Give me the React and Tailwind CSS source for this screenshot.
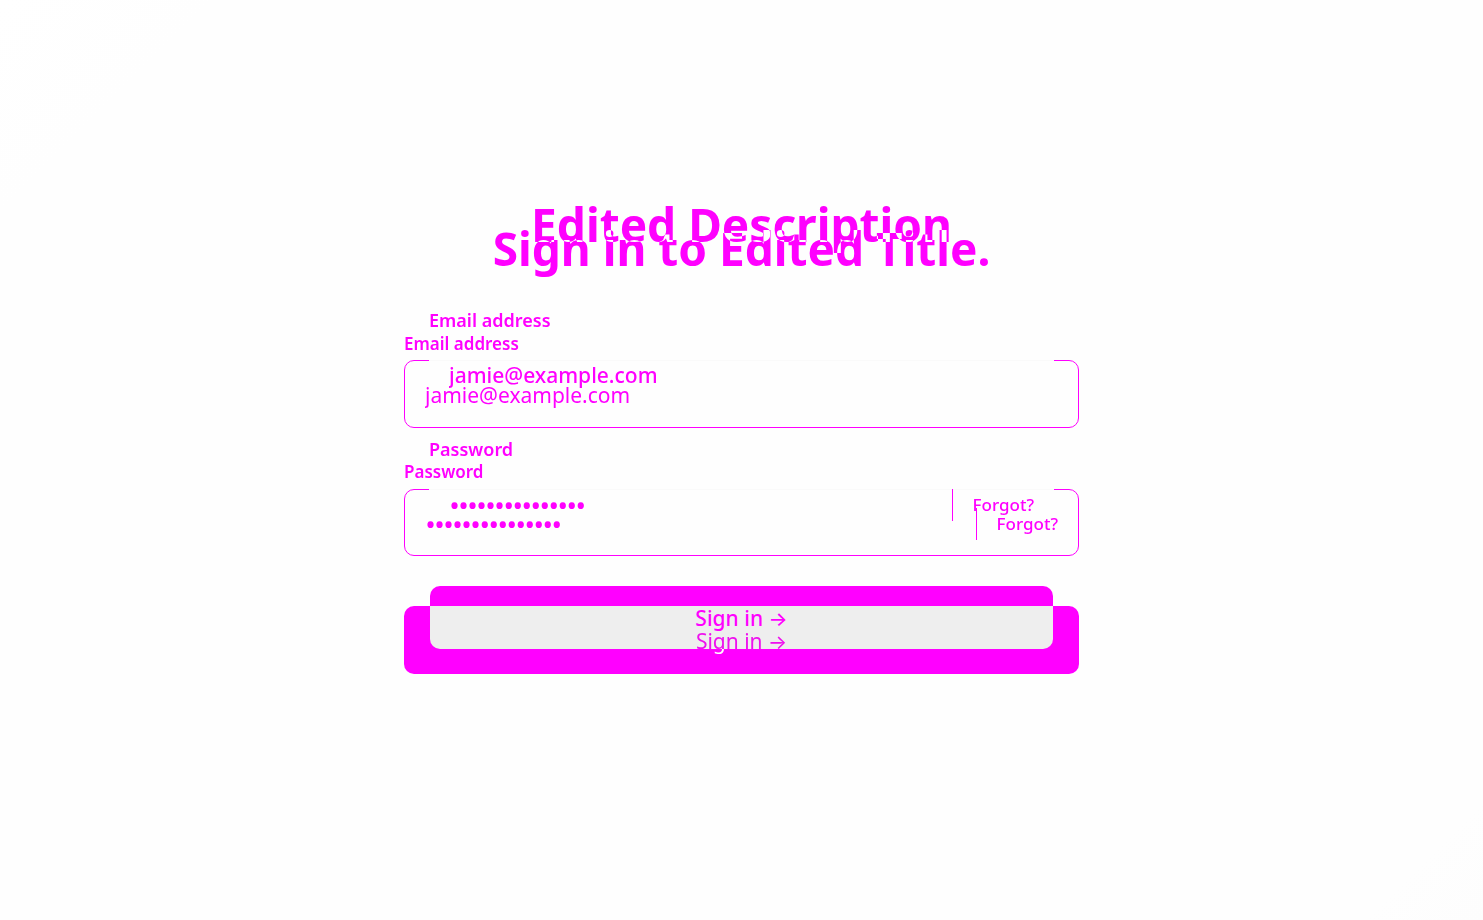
import React from "react";

const textField = "block w-full bg-transparent px-5 text-[21px] outline-none";
const passwordField = "h-full min-w-0 flex-1 bg-transparent px-[21px] text-[24px] font-semibold outline-none";
const forgotButton = "h-[32px] border-l border-[#ff00ff] pl-5 text-[17px] font-medium";

function SignInText() {
  return (
    <>
      Sign in <span className="font-['Inter',sans-serif] text-[20px] leading-none">→</span>
    </>
  );
}

function WideForm() {
  return (
    <form className="col-start-1 row-start-1 w-full max-w-[675px] justify-self-center pt-6" onSubmit={(e) => e.preventDefault()}>
      <h1 className="whitespace-nowrap pt-[2px] text-center text-[46px] leading-[64px] font-bold">Sign in to Edited Title.</h1>
      <label htmlFor="email" className="mt-[53px] block text-[17px] leading-[22px] font-semibold">Email address</label>
      <input id="email" type="email" defaultValue="jamie@example.com" className={`${textField} mt-[5px] h-[68px] rounded-[10px] border border-[#ff00ff] pt-[2px]`} />
      <label htmlFor="password" className="mt-[33px] block text-[17px] leading-[22px] font-semibold">Password</label>
      <div className="mt-[6px] flex h-[67px] items-center rounded-[10px] border border-[#ff00ff] pt-[2px] pr-5">
        <input id="password" type="password" defaultValue="examplepassword" className={passwordField} />
        <button type="button" className={forgotButton}>Forgot?</button>
      </div>
      <button type="submit" className="mt-[50px] block h-[68px] w-full rounded-[10px] bg-[#ff00ff] pt-[4px] text-[21px]">
        <span className="relative z-10 text-[#00ff00] mix-blend-difference"><SignInText /></span>
      </button>
    </form>
  );
}

function NarrowForm() {
  return (
    <form className="col-start-1 row-start-1 w-full max-w-[625px] justify-self-center" onSubmit={(e) => e.preventDefault()}>
      <h2 className="whitespace-nowrap pt-[2px] text-center text-[46px] leading-[64px] font-bold text-[#00ff00] mix-blend-difference">Edited Description</h2>
      <label htmlFor="email-edited" className="mt-[53px] block text-[18px] leading-[22px] font-semibold">Email address</label>
      <input id="email-edited" type="email" defaultValue="jamie@example.com" className={`${textField} relative mt-[29px] h-[30px] border-t border-[#fafafa] font-medium`} />
      <label htmlFor="password-edited" className="mt-[48px] block text-[18px] leading-[22px] font-semibold">Password</label>
      <div className="relative mt-[29px] flex h-[30px] items-center border-t border-[#fafafa] pr-5">
        <input id="password-edited" type="password" defaultValue="examplepassword" className={passwordField} />
        <button type="button" className={forgotButton}>Forgot?</button>
      </div>
      <div className="mt-[67px] px-px">
        <button type="submit" className="relative block h-[63px] w-full rounded-[10px] bg-[linear-gradient(#ff00ff_20px,#eeeeee_20px)] pt-[2px] text-[21px] font-medium"><SignInText /></button>
      </div>
    </form>
  );
}

export default function App() {
  return (
    <main className="grid min-h-screen w-full content-start bg-[linear-gradient(135deg,#ffffff_0%,#fefefe_9%,#fefefe_95%,#fdfdfd_100%)] px-6 pt-[190px] font-['Noto_Sans','Open_Sans',sans-serif] text-[#ff00ff]">
      <WideForm />
      <NarrowForm />
    </main>
  );
}
